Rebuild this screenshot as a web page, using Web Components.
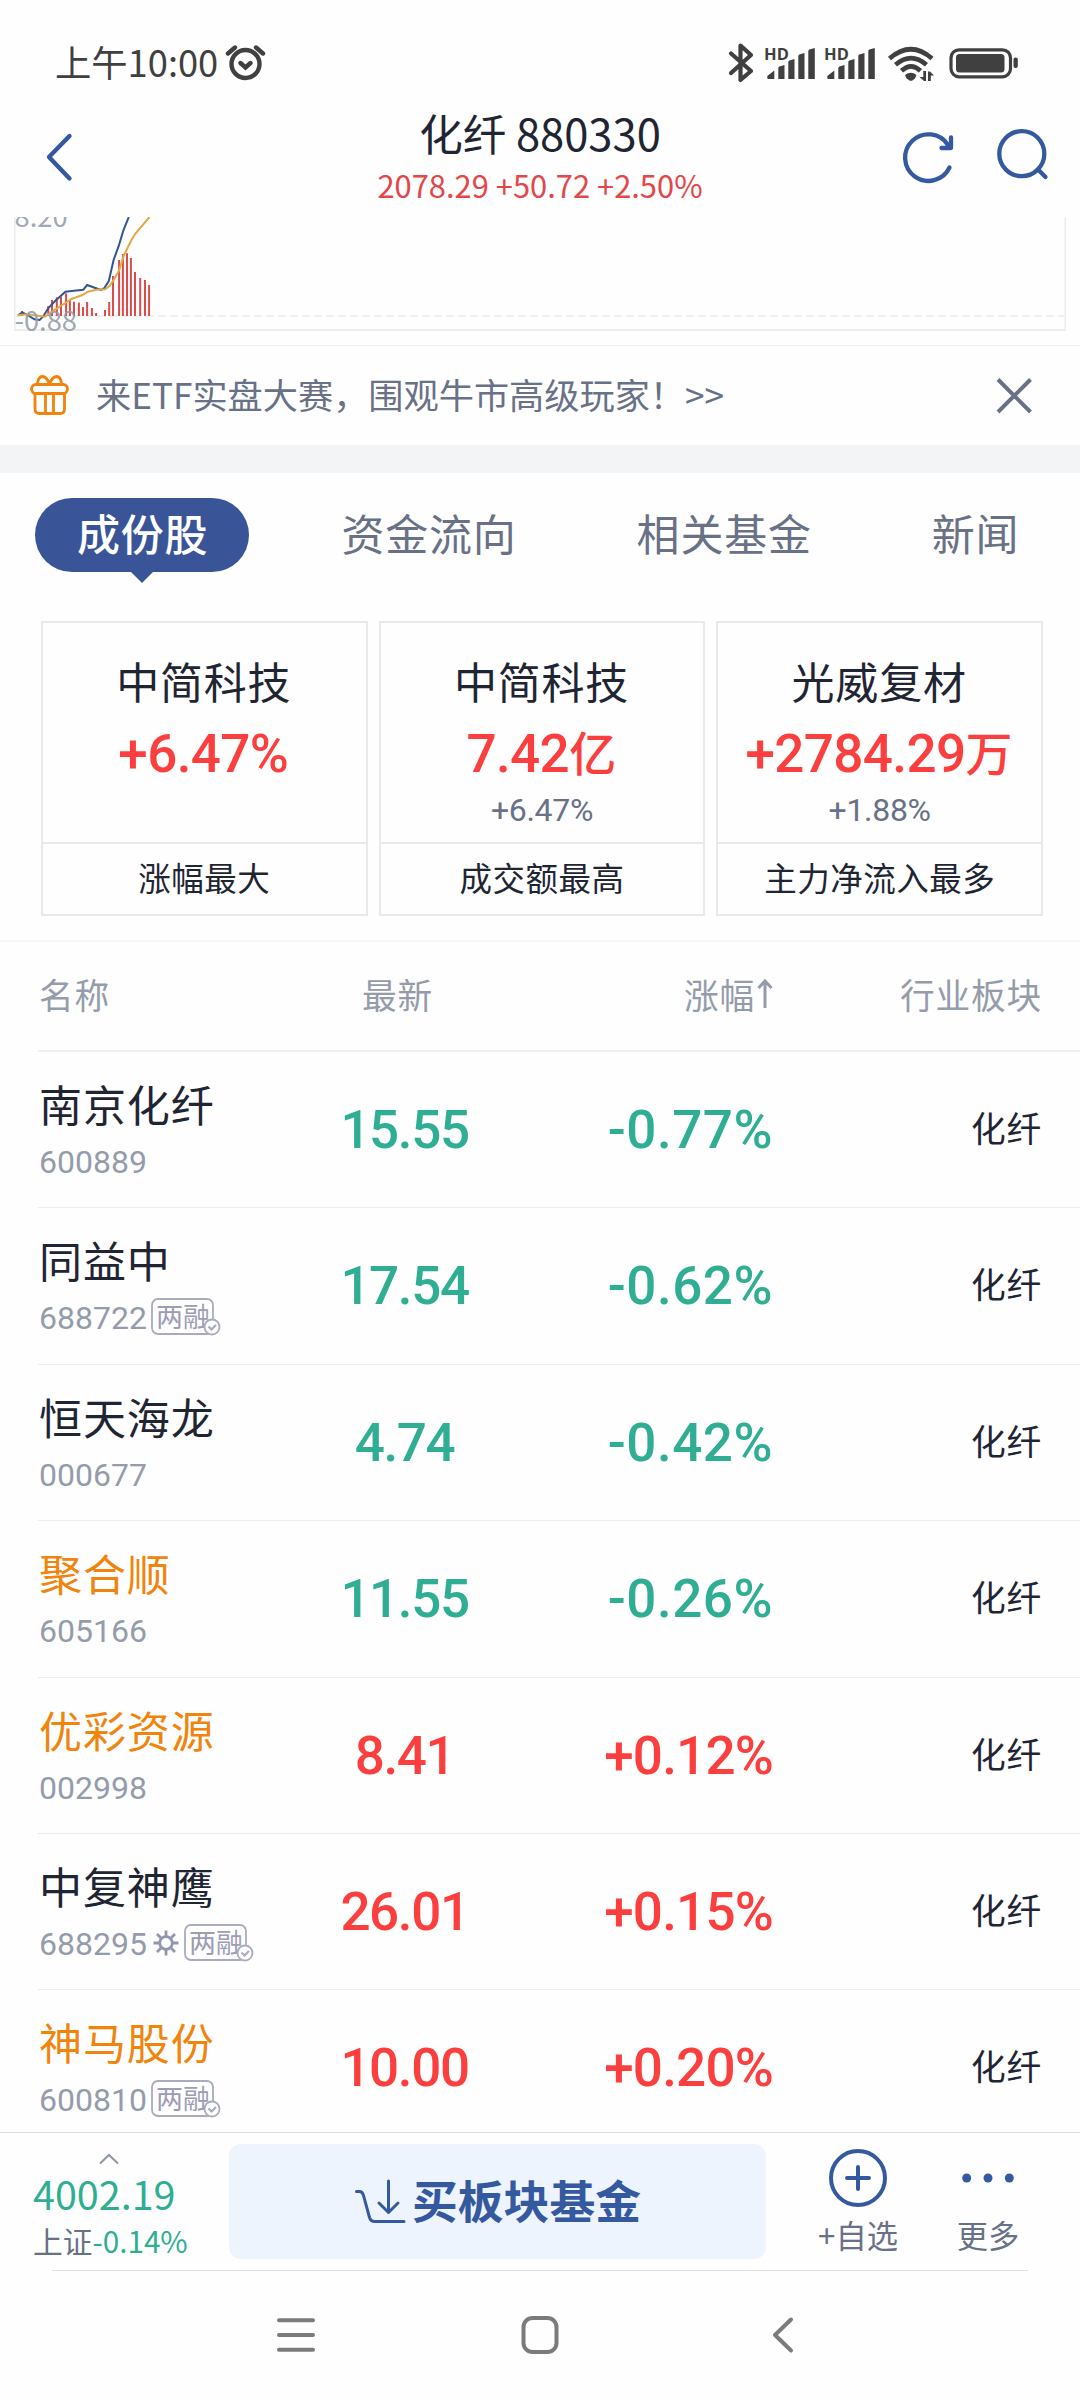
<!DOCTYPE html>
<html lang="zh-CN">
<head>
<meta charset="utf-8">
<title>化纤 880330</title>
<style>
  html, body {
    margin: 0;
    padding: 0;
  }

  body {
    --ink: #1f2533;
    --slate: #687186;
    --muted: #949cab;
    --blue: #34599e;
    --red: #fb3e3e;
    --green: #2fae94;
    --orange: #f0840c;
    --line: #eeeff0;
    --number: Roboto, "Noto Sans CJK SC", sans-serif;
    background: #fefefe;
    color: var( --ink );
    font-family: "Noto Sans CJK SC", sans-serif;
    height: 2400px;
    overflow: hidden;
    width: 1080px;
  }
</style>
</head>
<body>

<stock-app>
  <status-bar time="上午10:00"></status-bar>
  <title-bar quote="2078.29 +50.72 +2.50%">化纤 880330</title-bar>
  <macd-chart high="8.20" low="-0.88"></macd-chart>
  <promo-banner>来ETF实盘大赛，围观牛市高级玩家！&gt;&gt;</promo-banner>
  <tab-bar>
    <tab-item selected>成份股</tab-item>
    <tab-item>资金流向</tab-item>
    <tab-item>相关基金</tab-item>
    <tab-item>新闻</tab-item>
  </tab-bar>
  <card-group>
    <leader-card name="中简科技" value="+6.47%">涨幅最大</leader-card>
    <leader-card name="中简科技" value="7.42" unit="亿" change="+6.47%">成交额最高</leader-card>
    <leader-card name="光威复材" value="+2784.29" unit="万" change="+1.88%">主力净流入最多</leader-card>
  </card-group>
  <stock-list>
    <stock-row name="南京化纤" code="600889" latest="15.55" change="-0.77%" sector="化纤"></stock-row>
    <stock-row name="同益中" code="688722" latest="17.54" change="-0.62%" sector="化纤" margin></stock-row>
    <stock-row name="恒天海龙" code="000677" latest="4.74" change="-0.42%" sector="化纤"></stock-row>
    <stock-row name="聚合顺" code="605166" latest="11.55" change="-0.26%" sector="化纤" watched></stock-row>
    <stock-row name="优彩资源" code="002998" latest="8.41" change="+0.12%" sector="化纤" watched></stock-row>
    <stock-row name="中复神鹰" code="688295" latest="26.01" change="+0.15%" sector="化纤" star margin></stock-row>
    <stock-row name="神马股份" code="600810" latest="10.00" change="+0.20%" sector="化纤" watched margin></stock-row>
  </stock-list>
  <action-bar slot="footer" index="4002.19" change="-0.14%">买板块基金</action-bar>
  <system-nav slot="footer"></system-nav>
</stock-app>

<script>
  // Shared setup
  // Shadow root from markup
  class BaseElement extends HTMLElement {
    constructor() {
      super();

      const template = document.createElement( 'template' );
      template.innerHTML = this.constructor.markup;

      this.attachShadow( {mode: 'open'} );
      this.shadowRoot.appendChild( template.content.cloneNode( true ) );
    }

    // Copy attributes to matching parts
    connectedCallback() {
      this.shadowRoot.querySelectorAll( '[part]' ).forEach( ( element ) => {
        const value = this.getAttribute( element.getAttribute( 'part' ) );
        if( value !== null ) {
          element.textContent = value;
        }
      } );
    }
  }

  class StockApp extends BaseElement {
    static markup = /* template */ `
      <style>
        :host {
          display: flex;
          flex-direction: column;
          height: 2400px;
        }

        main {
          flex: 1;
          min-height: 0;
          overflow: hidden;
        }
      </style>
      <main><slot></slot></main>
      <slot name="footer"></slot>
    `;
  }

  class StatusBar extends BaseElement {
    static markup = /* template */ `
      <style>
        :host {
          align-items: center;
          box-sizing: border-box;
          color: #404040;
          display: flex;
          height: 104px;
          padding: 22px 60px 0 55px;
        }

        [part=time] {
          font-size: 36.3px;
          line-height: 50px;
          padding-bottom: 4px;
        }

        svg {
          display: block;
          flex: none;
        }

        .alarm {
          margin-left: 6px;
        }

        .icons {
          display: flex;
          margin-left: auto;
        }
      </style>
      <span part="time"></span>
      <svg class="alarm" width="42" height="42" viewBox="223 42 42 42" fill="none" stroke="#404040" stroke-width="4.4" stroke-linecap="round">
        <circle cx="244.5" cy="64" r="14"/>
        <path d="M239.5 63l5 4.500 5-4.500M227 53.500l7-6M262 53.500l-7-6"/>
      </svg>
      <svg class="icons" width="294" height="42" viewBox="726 42 294 42" fill="#404040">
        <path d="M731 53.500L751 71 740.500 80V45.500L751 55 731 73" fill="none" stroke="#404040" stroke-width="4.200" stroke-linecap="round" stroke-linejoin="round"/>
        <g id="signal">
          <text x="764" y="59.500" font-family="Open Sans" font-size="16.500" font-weight="700" textLength="25">HD</text>
          <path d="M767.300 76l7-5.500V79h-6q-1 0-1-1zM778.300 68q0-1 1-1.500l5.200-1.500V79h-6.200zM788.300 62q0-1 1-1.500l5.200-1.500V79h-6.200zM798.300 56q0-1 1-1.500l5.200-1.500V79h-6.200zM808.300 51q0-1 1-1.500l5.500-1.500V79h-6.500z"/>
        </g>
        <use href="#signal" x="60"/>
        <g fill="none" stroke="#404040" stroke-width="4.600">
          <path d="M889.500 58.500Q911 40 932 58.500M895.500 64.800Q911 51.500 926.500 64.800M901.500 70.800Q911 62 920.500 70.800"/>
        </g>
        <path d="M905 75q6-4.500 11.500 0l-1.500 3.500-3 2.300h-2l-3.500-2.300z"/>
        <path d="M923.300 71h2.700v10h-2l-4.500-4h3.800zM928 71.500h2l4 4h-3.200v5.500H928z"/>
        <rect x="951" y="49.800" width="59.500" height="27" rx="8" fill="none" stroke="#404040" stroke-width="3.200"/>
        <rect x="956" y="54" width="48.500" height="18.500" rx="3.500"/>
        <rect x="1013.500" y="57.500" width="4.300" height="10.500" rx="2"/>
      </svg>
    `;
  }

  class TitleBar extends BaseElement {
    static markup = /* template */ `
      <style>
        :host {
          align-items: center;
          box-sizing: border-box;
          display: flex;
          height: 113px;
          justify-content: space-between;
          padding: 0 30px 0 40px;
        }

        div {
          margin-left: 100px;
          text-align: center;
        }

        h1 {
          font-size: 43.5px;
          font-weight: 400;
          line-height: 60px;
          margin: -2px 0 0 0;
        }

        p {
          color: #e3474a;
          font-size: 30.9px;
          line-height: 42px;
          margin: 1px 0 10px 0;
        }

        svg {
          display: block;
          margin-bottom: 7px;
          overflow: visible;
        }
      </style>
      <svg width="40" height="54" viewBox="40 130 40 54" fill="none" stroke="#34599e" stroke-width="4.400" stroke-linecap="round" stroke-linejoin="round">
        <path d="M69.500 136L49 157l20.500 21.500"/>
      </svg>
      <div>
        <h1><slot></slot></h1>
        <p part="quote"></p>
      </div>
      <svg width="150" height="54" viewBox="900 130 150 54" fill="none" stroke="#34599e" stroke-width="4.300" stroke-linecap="round" stroke-linejoin="round">
        <path d="M949.500 167.500A23.300 23.300 0 1 1 948 145M951 137.500V148H941.500"/>
        <circle cx="1021.800" cy="153.700" r="22.500"/>
        <path d="M1038 169.500l7.500 7.500"/>
      </svg>
    `;
  }

  class MacdChart extends BaseElement {
    static markup = /* template */ `
      <style>
        :host {
          border-bottom: 1px solid #f1f1f2;
          display: block;
          height: 128px;
        }

        svg {
          display: block;
          font-family: "Noto Sans CJK SC", sans-serif;
        }
      </style>
      <svg width="1080" height="128" fill="none">
        <path d="M14.800 0V114M1065.200 0V114" stroke="#eceded" stroke-width="1.500"/>
        <path d="M14 113H1066" stroke="#eceded" stroke-width="2"/>
        <path d="M14 99H1066" stroke="#f0f0f0" stroke-width="2" stroke-dasharray="8 4"/>
        <g id="bars" stroke="#dc4a4a" stroke-width="2"></g>
        <polyline id="dif" stroke="#34568f" stroke-width="2"/>
        <polyline id="dea" stroke="#e2a944" stroke-width="2"/>
        <g fill="#949cab" fill-opacity=".9" font-size="27.300">
          <text part="high" x="14.500" y="9.500"></text>
          <text part="low" x="14.500" y="114"></text>
        </g>
      </svg>
    `;

    // Bar position and top edge
    static bars = [
      [22, 94], [48.2, 89], [52, 83], [56.8, 80.3], [61, 79.7], [66.1, 76.3],
      [69.9, 83], [74, 84.7], [78.9, 85.7], [83, 90], [87.1, 85], [91.9, 91],
      [96.1, 96], [105, 93], [109.2, 85], [113, 59], [119.1, 43], [122.9, 37],
      [127, 36.3], [130.9, 41], [135, 55], [140.2, 61], [145, 63], [149.1, 68]
    ];

    static dif = '17.9,98.3 22.4,95.3 27.5,98 34.4,102.3 39.6,103 43,99.7 48.2,91.3 55.1,84 65.4,74.7 74,73.7 83.3,72.7 87.1,68 94.7,70.7 100.9,73 104.3,71 108.8,64 113.6,43 118.8,28.7 123.3,13.7 128.8,0';
    static dea = '17.9,98.3 27.5,97.3 44.8,99.7 53.4,93.7 65.4,86 71.3,82 82.6,78 87.8,74.7 96.4,72.7 105,72.3 109.5,69 113.6,63 118.8,54 124,38 131.5,23 135,17 149.5,0';

    connectedCallback() {
      super.connectedCallback();

      this.shadowRoot.querySelector( '#bars' ).innerHTML = MacdChart.bars
        .map( ( [x, y] ) => `<path d="M${x} 99V${y}"/>` )
        .join( '' );
      this.shadowRoot.querySelector( '#dif' ).setAttribute( 'points', MacdChart.dif );
      this.shadowRoot.querySelector( '#dea' ).setAttribute( 'points', MacdChart.dea );
    }
  }

  class PromoBanner extends BaseElement {
    static markup = /* template */ `
      <style>
        :host {
          align-items: center;
          border-bottom: 28px solid #f3f4f6;
          color: var( --slate );
          display: flex;
          font-size: 35.2px;
          height: 99px;
          line-height: 50px;
          padding: 0 46px 0 28px;
        }

        span {
          flex: 1;
          padding: 0 0 3px 25px;
          white-space: nowrap;
        }

        svg {
          margin-bottom: 1px;
        }
      </style>
      <svg width="43" height="44" viewBox="28 373 43 44" fill="none" stroke="#f0840c" stroke-width="2.800" stroke-linejoin="round">
        <rect x="31.500" y="384.500" width="36" height="9" rx="4.500"/>
        <path d="M35 394v15q0 4.500 4.500 4.500h20.500q4.500 0 4.500-4.500V394M45.500 394v19M53.500 394v19M37.500 384q.5-7.500 5-7.500 4 0 7 7.500 3-7.500 7-7.500 4.500 0 5 7.500"/>
      </svg>
      <span><slot></slot></span>
      <svg width="40" height="40" viewBox="994 375 40 40" stroke="#687186" stroke-width="4">
        <path d="M998 379.500l32.500 32.500M1030.500 379.500L998 412"/>
      </svg>
    `;
  }

  class TabBar extends BaseElement {
    static markup = /* template */ `
      <style>
        :host {
          align-items: center;
          display: flex;
          gap: 120px;
          height: 123px;
          padding-left: 35px;
        }
      </style>
      <slot></slot>
    `;
  }

  class TabItem extends BaseElement {
    static markup = /* template */ `
      <style>
        :host {
          color: var( --slate );
          display: block;
          font-size: 43px;
          letter-spacing: 0.8px;
          line-height: 68px;
          padding-bottom: 6px;
          position: relative;
        }

        :host( [selected] ) {
          background: #395597;
          border-radius: 37px;
          color: #ffffff;
          font-weight: 500;
          margin-right: -28px;
          padding: 0 41px 6px 42px;
        }

        /* Pointer under the pill */
        :host( [selected] )::after {
          border: 11px solid transparent;
          border-bottom-width: 0;
          border-top-color: #395597;
          content: '';
          left: 50%;
          margin-left: -11px;
          position: absolute;
          top: 100%;
        }
      </style>
      <slot></slot>
    `;
  }

  class CardGroup extends BaseElement {
    static markup = /* template */ `
      <style>
        :host {
          border-bottom: 2px solid #f6f6f6;
          display: grid;
          gap: 11px;
          grid-template-columns: repeat( 3, 1fr );
          padding: 25px 37px 24px 41px;
        }
      </style>
      <slot></slot>
    `;
  }

  class LeaderCard extends BaseElement {
    static markup = /* template */ `
      <style>
        :host {
          border: 2px solid #e8e9ec;
          box-sizing: border-box;
          display: block;
          height: 295px;
          text-align: center;
        }

        section {
          border-bottom: 2px solid #e8e9ec;
          box-sizing: border-box;
          height: 221px;
          padding-top: 21px;
        }

        p {
          margin: 0;
        }

        [part=name] {
          font-size: 43px;
          letter-spacing: 0.8px;
          line-height: 72px;
          margin-left: -1px;
        }

        .value {
          color: var( --red );
          font-family: var( --number );
          font-size: 53px;
          font-weight: 500;
          height: 70px;
          letter-spacing: -0.6px;
          line-height: 70px;
          margin: 3px 0 0 -2px;
          white-space: nowrap;
        }

        [part=unit] {
          display: inline-block;
          font-size: 47px;
          line-height: 60px;
          vertical-align: 1px;
        }

        [part=change] {
          color: var( --slate );
          font-family: var( --number );
          font-size: 32px;
          letter-spacing: -0.3px;
          line-height: 42px;
        }

        footer {
          font-size: 32.5px;
          letter-spacing: 0.5px;
          line-height: 66px;
        }
      </style>
      <section>
        <p part="name"></p>
        <p class="value"><span part="value"></span><span part="unit"></span></p>
        <p part="change"></p>
      </section>
      <footer><slot></slot></footer>
    `;
  }

  class StockList extends BaseElement {
    static markup = /* template */ `
      <style>
        :host {
          display: block;
        }

        header {
          border-bottom: 2px solid var( --line );
          color: var( --muted );
          display: grid;
          font-size: 34.7px;
          grid-template-columns: 238px 254px 243px 269px;
          height: 108px;
          letter-spacing: 0.8px;
          line-height: 104px;
          margin-left: 38px;
        }

        span:nth-child( 1 ) {
          padding-left: 1px;
        }

        span:nth-child( 2 ) {
          padding-right: 11px;
          text-align: center;
        }

        span:nth-child( n + 3 ) {
          text-align: right;
        }

        svg {
          margin-left: 2px;
        }
      </style>
      <header>
        <span>名称</span>
        <span>最新</span>
        <span>涨幅<svg width="16" height="30" viewBox="0 0 16 30" fill="none" stroke="#949cab" stroke-width="3"><path d="M8 29V2M1.500 9L8 2l6.500 7"/></svg></span>
        <span>行业板块</span>
      </header>
      <slot></slot>
    `;
  }

  class StockRow extends BaseElement {
    static markup = /* template */ `
      <style>
        :host {
          border-bottom: 1.4px solid #ececed;
          box-sizing: border-box;
          display: grid;
          grid-template-columns: 238px 254px 243px 269px;
          height: 156.4px;
          line-height: 156px;
          margin-left: 38px;
          --trend: var( --red );
        }

        :host( [change^='-'] ) {
          --trend: var( --green );
        }

        [part=name] {
          font-size: 43px;
          letter-spacing: 0.9px;
          line-height: 60px;
          padding: 21px 0 0 1px;
          white-space: nowrap;
        }

        :host( [watched] ) [part=name] {
          color: var( --orange );
        }

        .detail {
          align-items: center;
          color: var( --muted );
          display: flex;
          height: 50px;
          line-height: 50px;
          margin-top: 4px;
        }

        [part=code] {
          font-family: var( --number );
          font-size: 32px;
          letter-spacing: 0;
          padding-left: 1px;
        }

        svg {
          display: none;
          flex: none;
          margin: -2px 0 0 2px;
        }

        :host( [star] ) .star,
        :host( [margin] ) .margin {
          display: block;
        }

        .star {
          margin-left: 5px;
        }

        [part=latest],
        [part=change] {
          color: var( --trend );
          font-family: var( --number );
          font-size: 53px;
          font-weight: 500;
          text-align: center;
        }

        [part=latest] {
          letter-spacing: -1.4px;
          padding-left: 3px;
        }

        [part=change] {
          letter-spacing: -0.8px;
        }

        :host( [change^='-'] ) [part=change] {
          letter-spacing: 0.5px;
        }

        [part=change],
        [part=sector] {
          text-align: right;
        }

        [part=sector] {
          font-size: 34.7px;
          letter-spacing: 0.8px;
          line-height: 151px;
        }
      </style>
      <div>
        <div part="name"></div>
        <div class="detail">
          <span part="code"></span>
          <svg class="star" width="28" height="28" viewBox="-14 -14 28 28" fill="none" stroke="#9495b0" stroke-width="2.800">
            <circle r="6.300"/>
            <path d="M0-7V-12.500M0 7V12.500M-7 0H-12.500M7 0H12.500M-5-5L-9-9M5-5L9-9M-5 5L-9 9M5 5L9 9"/>
          </svg>
          <svg class="margin" width="72" height="40" viewBox="0 0 72 40" fill="none" stroke="#aaaac0" stroke-width="1.800">
            <rect x="3" y="2" width="61" height="35" rx="6"/>
            <text x="7" y="29.500" fill="#9c9cb6" stroke="none" font-family="Noto Sans CJK SC" font-size="27">两融</text>
            <circle cx="63" cy="30" r="7.500" fill="#fefefe"/>
            <path d="M59.500 29.500l3 3 4.500-4.500" stroke-width="2.200"/>
          </svg>
        </div>
      </div>
      <span part="latest"></span>
      <span part="change"></span>
      <span part="sector"></span>
    `;
  }

  class ActionBar extends BaseElement {
    static markup = /* template */ `
      <style>
        :host {
          background: #fefefe;
          border-top: 1px solid #dcdddf;
          box-sizing: border-box;
          display: flex;
          flex: none;
          height: 138px;
          padding-top: 11px;
        }

        .index {
          box-sizing: border-box;
          color: var( --green );
          padding: 9px 0 0 33px;
          width: 229px;
        }

        .index svg {
          display: block;
          margin-left: 66px;
        }

        [part=index] {
          font-size: 39.5px;
          line-height: 52px;
          margin-top: 2px;
        }

        .market {
          font-size: 29.7px;
          line-height: 40px;
          margin-top: 2px;
        }

        .market b {
          color: var( --slate );
          font-weight: 400;
        }

        button {
          align-items: center;
          background: #edf4fe;
          border: 0;
          border-radius: 12px;
          color: var( --blue );
          display: flex;
          font: 700 45.8px/60px "Noto Sans CJK SC", sans-serif;
          height: 115px;
          justify-content: center;
          padding: 0 0 5px 0;
          width: 537px;
        }

        button svg {
          margin: 4px 6px 0 0;
        }

        .tool {
          color: var( --slate );
          font-size: 31.3px;
          line-height: 44px;
          text-align: center;
          width: 130px;
        }

        .tool:nth-of-type( 2 ) {
          margin-left: 27px;
        }

        .tool svg {
          display: block;
          margin: 4px auto 5px auto;
        }
      </style>
      <div class="index">
        <svg width="20" height="12" viewBox="0 0 20 12" fill="none" stroke="#8f96a8" stroke-width="2"><path d="M1 10.500l9-8.500 9 8.500"/></svg>
        <div part="index"></div>
        <div class="market"><b>上证</b><span part="change"></span></div>
      </div>
      <button>
        <svg width="52" height="48" viewBox="353 2177 52 48" fill="none" stroke="#34599e" stroke-width="3" stroke-linecap="round" stroke-linejoin="round">
          <path d="M355.500 2191.500h3q3 0 4 4l6 22q1.200 4 5 4h29.500M387.500 2181v31M378 2203l9.500 9.500 9.500-9.500"/>
        </svg>
        <slot></slot>
      </button>
      <div class="tool">
        <svg width="60" height="60" viewBox="-30 -30 60 60" fill="none" stroke="#34599e" stroke-width="4" stroke-linecap="round">
          <circle r="27"/>
          <path d="M-11 0H11M0-11V11"/>
        </svg>
        +自选
      </div>
      <div class="tool">
        <svg width="60" height="60" viewBox="-30 -30 60 60" fill="#34599e">
          <circle cx="-21.300" r="4.500"/>
          <circle r="4.500"/>
          <circle cx="21.300" r="4.500"/>
        </svg>
        更多
      </div>
    `;
  }

  class SystemNav extends BaseElement {
    static markup = /* template */ `
      <style>
        :host {
          display: block;
          flex: none;
          height: 130px;
        }

        hr {
          background: #e0e0e1;
          border: 0;
          height: 1px;
          margin: 0 52px;
        }

        nav {
          display: flex;
          justify-content: space-between;
          padding: 41px 274px 0 273px;
        }
      </style>
      <hr>
      <nav>
        <svg width="46" height="46" viewBox="-23 -23 46 46" stroke="#7b7b7b" stroke-width="4" stroke-linecap="round">
          <path d="M-17-14.800H17M-17 0H17M-17 14.800H17"/>
        </svg>
        <svg width="46" height="46" viewBox="-23 -23 46 46" fill="none" stroke="#7b7b7b" stroke-width="4">
          <rect x="-16.500" y="-17" width="33" height="34" rx="9"/>
        </svg>
        <svg width="46" height="46" viewBox="-23 -23 46 46" fill="none" stroke="#7b7b7b" stroke-width="4" stroke-linecap="round" stroke-linejoin="round">
          <path d="M8-15.500L-8 0 8 15.500"/>
        </svg>
      </nav>
    `;
  }

  window.customElements.define( 'stock-app', StockApp );
  window.customElements.define( 'status-bar', StatusBar );
  window.customElements.define( 'title-bar', TitleBar );
  window.customElements.define( 'macd-chart', MacdChart );
  window.customElements.define( 'promo-banner', PromoBanner );
  window.customElements.define( 'tab-bar', TabBar );
  window.customElements.define( 'tab-item', TabItem );
  window.customElements.define( 'card-group', CardGroup );
  window.customElements.define( 'leader-card', LeaderCard );
  window.customElements.define( 'stock-list', StockList );
  window.customElements.define( 'stock-row', StockRow );
  window.customElements.define( 'action-bar', ActionBar );
  window.customElements.define( 'system-nav', SystemNav );
</script>
</body>
</html>
